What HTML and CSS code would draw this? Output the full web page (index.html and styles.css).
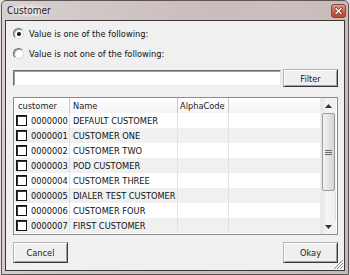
FILE: index.html
```html
<!DOCTYPE html>
<html>
<head>
<meta charset="utf-8">
<link rel="stylesheet" href="styles.css">
</head>
<body>
<div class="window">
  <div class="titlebar">
    <span class="title">Customer</span>
    <span class="close"><svg width="15" height="14" viewBox="0 0 15 14"><defs><linearGradient id="cg" x1="0" y1="0" x2="0" y2="1"><stop offset="0" stop-color="#e9a08f"/><stop offset="0.5" stop-color="#d4604a"/><stop offset="1" stop-color="#c0442c"/></linearGradient></defs><rect x="0.5" y="0.5" width="14" height="13" rx="2.5" fill="url(#cg)" stroke="#7a4a42"/><path d="M5 4.5 L10 9.5 M10 4.5 L5 9.5" stroke="#5a2a22" stroke-width="2.6" stroke-linecap="square"/><path d="M5 4.5 L10 9.5 M10 4.5 L5 9.5" stroke="#fff" stroke-width="1.4" stroke-linecap="square"/></svg></span>
  </div>
  <div class="client">
    <div class="radio-row"><span class="radio checked"></span><span>Value is one of the following:</span></div>
    <div class="radio-row second"><span class="radio"></span><span>Value is not one of the following:</span></div>
    <div class="filter-row">
      <div class="textbox"></div>
      <div class="btn">Filter</div>
    </div>
    <div class="list">
      <div class="grid">
        <div class="row header">
          <div class="c1">customer</div>
          <div class="c2">Name</div>
          <div class="c3">AlphaCode</div>
          <div class="c4"></div>
        </div>
        <div class="row"><div class="c1"><span class="chk"></span>0000000</div><div class="c2">DEFAULT CUSTOMER</div><div class="c3"></div><div class="c4"></div></div>
        <div class="row"><div class="c1"><span class="chk"></span>0000001</div><div class="c2">CUSTOMER ONE</div><div class="c3"></div><div class="c4"></div></div>
        <div class="row"><div class="c1"><span class="chk"></span>0000002</div><div class="c2">CUSTOMER TWO</div><div class="c3"></div><div class="c4"></div></div>
        <div class="row"><div class="c1"><span class="chk"></span>0000003</div><div class="c2">POD CUSTOMER</div><div class="c3"></div><div class="c4"></div></div>
        <div class="row"><div class="c1"><span class="chk"></span>0000004</div><div class="c2">CUSTOMER THREE</div><div class="c3"></div><div class="c4"></div></div>
        <div class="row"><div class="c1"><span class="chk"></span>0000005</div><div class="c2">DIALER TEST CUSTOMER</div><div class="c3"></div><div class="c4"></div></div>
        <div class="row"><div class="c1"><span class="chk"></span>0000006</div><div class="c2">CUSTOMER FOUR</div><div class="c3"></div><div class="c4"></div></div>
        <div class="row"><div class="c1"><span class="chk"></span>0000007</div><div class="c2">FIRST CUSTOMER</div><div class="c3"></div><div class="c4"></div></div>
      </div>
      <div class="scrollbar">
        <div class="arrow up"><svg width="7" height="4" viewBox="0 0 7 4"><path d="M0 4 L3.5 0 L7 4 Z" fill="#333"/></svg></div>
        <div class="thumb"><span class="grip"></span></div>
        <div class="track"></div>
        <div class="arrow down"><svg width="7" height="4" viewBox="0 0 7 4"><path d="M0 0 L3.5 4 L7 0 Z" fill="#333"/></svg></div>
      </div>
    </div>
    <div class="buttons">
      <div class="btn wide">Cancel</div>
      <div class="btn wide">Okay</div>
    </div>
    <svg class="sizegrip" width="12" height="12" viewBox="0 0 12 12"><path d="M11 2 L2 11 M11 5 L5 11 M11 8 L8 11" stroke="#8a8a8a" stroke-width="1"/><path d="M12 3 L3 12 M12 6 L6 12 M12 9 L9 12" stroke="#fff" stroke-width="1"/></svg>
  </div>
</div>
</body>
</html>
```

FILE: styles.css
```css
html, body { margin: 0; padding: 0; }
body {
  width: 350px; height: 275px; overflow: hidden;
  background: #e4e0df;
  font-family: "DejaVu Sans", "Liberation Sans", sans-serif;
  font-stretch: condensed;
  font-size: 9.2px;
  color: #111;
}
.window {
  box-sizing: border-box;
  width: 348px; height: 275px;
  margin-left: 1px;
  border: 1px solid #5c5555;
  border-radius: 5px 5px 0 0;
  background: linear-gradient(100deg, #d8d1d0 0%, #cfc5c3 30%, #c9bcba 55%, #cbc0be 70%, #c6b8b6 100%);
  padding: 0 3px 3px 3px;
  display: flex; flex-direction: column;
}
.titlebar {
  height: 19px; flex: none;
  margin: 0 -3px;
  padding: 0 2px 0 5px;
  display: flex; align-items: center; justify-content: space-between;
}
.title {
  font-family: "DejaVu Sans", sans-serif; font-stretch: condensed;
  font-size: 10px; color: #1a1a1a;
  padding: 1px 0;
  background: radial-gradient(ellipse at center, rgba(235,232,231,0.9) 40%, rgba(235,232,231,0) 75%);
}
.close { display: block; width: 15px; height: 14px; margin-top: 1px; }
.close svg { display: block; }
.client {
  position: relative;
  box-sizing: border-box;
  height: 251px; flex: none;
  border: 1px solid #3c3838;
  background: #f0f0f0;
  padding: 6px 6px 0 7px;
  display: flex; flex-direction: column;
}
.radio-row { height: 13px; display: flex; align-items: center; gap: 5px; }
.radio-row.second { margin-top: 7px; }
.radio {
  box-sizing: border-box; width: 11px; height: 11px; border-radius: 50%;
  background: #fff;
  border: 1px solid; border-color: #6a6a6a #dcdcdc #dcdcdc #6a6a6a;
  box-shadow: inset 1px 1px 0 #a8a8a8;
  display: flex; align-items: center; justify-content: center;
}
.radio.checked::after { content: ""; width: 4px; height: 4px; border-radius: 50%; background: #111; }
.filter-row { margin-top: 9px; height: 18px; display: flex; align-items: center; gap: 2px; }
.textbox {
  flex: 1; height: 16px; box-sizing: border-box; background: #fff;
  border: 1px solid; border-color: #6e6e6e #e6e6e6 #e6e6e6 #6e6e6e;
  box-shadow: inset 1px 1px 0 #a0a0a0;
}
.btn {
  box-sizing: border-box; width: 55px; height: 18px;
  background: #efefef;
  border: 1px solid; border-color: #b4b4b4 #3a3a3a #3a3a3a #b4b4b4;
  box-shadow: inset 1px 1px 0 #fff, inset -1px -1px 0 #a0a0a0;
  display: flex; align-items: center; justify-content: center;
  color: #222;
}
.btn.wide { height: 21px; }
.list {
  margin-top: 10px; height: 138px; box-sizing: border-box;
  border: 1px solid #8c8c8c;
  background: #fff;
  display: flex;
}
.grid { flex: 1; display: flex; flex-direction: column; overflow: hidden; }
.row { display: flex; height: 15px; flex: none; background: #fff; }
.row:nth-child(odd) { background: #f0f0f0; }
.row.header { background: linear-gradient(#ffffff, #f4f4f4); border-bottom: 0; }
.row > div { box-sizing: border-box; height: 100%; display: flex; align-items: center; white-space: nowrap; border-right: 1px solid #e2e2e2; }
.c1 { width: 56px; padding-left: 2px; }
.c2 { width: 108px; padding-left: 3px; }
.c3 { width: 51px; padding-left: 2px; }
.c4 { flex: 1; border-right: 0 !important; }
.header > div { border-right-color: #c8c8c8; color: #222; }
.header .c1 { padding-left: 4px; }
.chk {
  box-sizing: border-box; width: 11px; height: 11px; flex: none;
  border: 1px solid #111; box-shadow: inset 1px 1px 0 #333;
  background: #fff; margin-right: 4px;
}
.scrollbar {
  width: 15px; flex: none; margin-right: 1px;
  display: flex; flex-direction: column;
  background: linear-gradient(90deg, #e6e6e6, #f4f4f4 40%, #f0f0f0);
  border-left: 1px solid #ececec;
}
.arrow { height: 15px; flex: none; display: flex; align-items: center; justify-content: center; }
.thumb {
  height: 78px; flex: none; box-sizing: border-box; margin: 0 1px;
  border: 1px solid #a09a98; border-radius: 2px;
  background: linear-gradient(90deg, #f2f2f2, #e4e4e4 50%, #d6d4d3);
  display: flex; align-items: center; justify-content: center;
}
.grip { width: 7px; height: 5px; background: repeating-linear-gradient(#6a6a6a 0 1px, transparent 1px 2px); }
.track { flex: 1; border-right: 1px solid #dcdcdc; }
.buttons { margin-top: 7px; display: flex; justify-content: space-between; }
.sizegrip { position: absolute; right: 0; bottom: 0; }
```
